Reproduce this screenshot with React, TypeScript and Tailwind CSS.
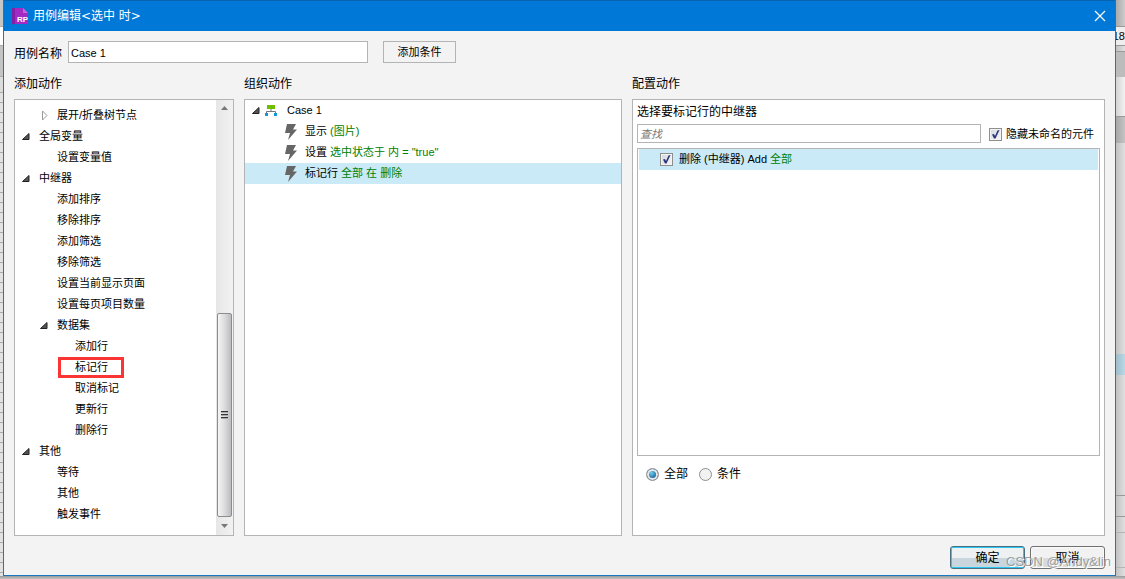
import React from "react";

type TreeItem = {
  label: string;
  level: 0 | 1 | 2;
  state?: "open" | "closed";
  marked?: boolean;
};

const treeItems: TreeItem[] = [
  { label: "展开/折叠树节点", level: 1, state: "closed" },
  { label: "全局变量", level: 0, state: "open" },
  { label: "设置变量值", level: 1 },
  { label: "中继器", level: 0, state: "open" },
  { label: "添加排序", level: 1 },
  { label: "移除排序", level: 1 },
  { label: "添加筛选", level: 1 },
  { label: "移除筛选", level: 1 },
  { label: "设置当前显示页面", level: 1 },
  { label: "设置每页项目数量", level: 1 },
  { label: "数据集", level: 1, state: "open" },
  { label: "添加行", level: 2 },
  { label: "标记行", level: 2, marked: true },
  { label: "取消标记", level: 2 },
  { label: "更新行", level: 2 },
  { label: "删除行", level: 2 },
  { label: "其他", level: 0, state: "open" },
  { label: "等待", level: 1 },
  { label: "其他", level: 1 },
  { label: "触发事件", level: 1 },
];

const indents = ["pl-[6px]", "pl-[24px]", "pl-[42px]"];

function OpenArrow() {
  return (
    <svg width="9" height="9" viewBox="0 0 9 9" className="shrink-0" aria-hidden="true">
      <path d="M8 1.5V7.5H1.5Z" fill="#555" stroke="#222" strokeWidth="1" />
    </svg>
  );
}

function ClosedArrow() {
  return (
    <svg width="9" height="11" viewBox="0 0 9 11" className="shrink-0" aria-hidden="true">
      <path d="M3.5 1V10L8 5.5Z" fill="#fff" stroke="#999" strokeWidth="1" />
    </svg>
  );
}

function Bolt() {
  return (
    <svg width="12" height="16" viewBox="0 0 12 16" className="shrink-0" aria-hidden="true">
      <path d="M2 0H11L8 5.5H12L3 16L5 9H0Z" fill="#666" />
    </svg>
  );
}

function CaseIcon() {
  return (
    <svg width="12" height="11" viewBox="0 0 12 11" className="block shrink-0" aria-hidden="true">
      <path d="M6 4V6M1.5 9V6.5H10.5V9" fill="none" stroke="#777" />
      <rect x="2" width="8" height="4" fill="#6fbe00" />
      <rect y="8" width="3" height="3" fill="#1296db" />
      <rect x="9" y="8" width="3" height="3" fill="#1296db" />
    </svg>
  );
}

function Tick({ id }: { id: string }) {
  return (
    <span className="grid size-[13px] shrink-0">
      <input
        id={id}
        type="checkbox"
        defaultChecked
        className="peer col-start-1 row-start-1 size-[13px] appearance-none border border-[#8e8f8f] bg-linear-to-br from-[#d3d6db] to-[#f8f8f8] shadow-[inset_0_0_0_1px_#f4f4f4]"
      />
      <svg
        viewBox="0 0 13 13"
        className="pointer-events-none invisible col-start-1 row-start-1 size-[13px] peer-checked:visible"
        aria-hidden="true"
      >
        <path d="M3 6.5L5 6L6 8L8.5 2.5L10.5 2L6.5 10.5H5Z" fill="#2b347c" />
      </svg>
    </span>
  );
}

function Choice({ id, label, checked }: { id: string; label: string; checked?: boolean }) {
  return (
    <div className="flex items-center gap-[5px]">
      <input
        id={id}
        type="radio"
        name="scope"
        defaultChecked={checked}
        className="size-[13px] appearance-none rounded-full border border-[#8e8f8f] bg-[#f2f2f2] checked:bg-radial-[at_40%_35%] checked:from-[#6fd0f5] checked:from-0% checked:to-[#0b4f80] checked:to-70% checked:shadow-[inset_0_0_0_2px_#e8e8e8]"
      />
      <label htmlFor={id}>{label}</label>
    </div>
  );
}

function ActionTree() {
  return (
    <div className="flex h-full border border-[#b4b4b4] bg-white text-[11px]">
      <ul className="min-w-0 flex-1 pt-[5px]">
        {treeItems.map((item, i) => (
          <li key={i} className={`flex h-[21px] items-center ${indents[item.level]}`}>
            <span className="flex w-[9px] shrink-0 justify-center">
              {item.state === "open" && <OpenArrow />}
              {item.state === "closed" && <ClosedArrow />}
            </span>
            {item.marked ? (
              <span className="-ml-[8px] flex h-[21px] w-[66px] items-center border-3 border-[#fb3434] pl-[14px]">
                {item.label}
              </span>
            ) : (
              <span className="pl-[9px]">{item.label}</span>
            )}
          </li>
        ))}
      </ul>
      <div className="flex w-[17px] flex-col items-center bg-linear-to-r from-[#e6e6e6] to-[#f2f2f2]">
        <svg width="7" height="17" viewBox="0 0 7 17" aria-hidden="true">
          <path d="M3.5 6L7 10H0Z" fill="#777" />
        </svg>
        <div className="flex-1" />
        <div className="flex h-[204px] w-[15px] items-center justify-center rounded-[2px] border border-[#8c8c8c] bg-linear-to-r from-[#f5f5f5] via-[#dcdcdf] to-[#bcbcc0]">
          <svg width="7" height="9" viewBox="0 0 7 9" aria-hidden="true">
            <path d="M0 .5H7M0 3.5H7M0 6.5H7" stroke="#333" />
            <path d="M0 1.5H7M0 4.5H7M0 7.5H7" stroke="#aaa" />
          </svg>
        </div>
        <svg width="7" height="18" viewBox="0 0 7 18" aria-hidden="true">
          <path d="M3.5 11L7 7H0Z" fill="#777" />
        </svg>
      </div>
    </div>
  );
}

function CaseRow({ name, detail, selected }: { name: string; detail: string; selected?: boolean }) {
  return (
    <li className={`flex h-[21px] items-center pl-[40px] ${selected ? "bg-[#cbeaf7]" : ""}`}>
      <Bolt />
      <span className="pl-[8px] whitespace-nowrap">
        {name} <span className="text-[#008000]">{detail}</span>
      </span>
    </li>
  );
}

function CasePanel() {
  return (
    <ul className="h-full border border-[#b4b4b4] bg-white text-[11px]">
      <li className="flex h-[21px] items-center pl-[6px]">
        <OpenArrow />
        <span className="pl-[5px]">
          <CaseIcon />
        </span>
        <span className="pl-[10px]">Case 1</span>
      </li>
      <CaseRow name="显示" detail="(图片)" />
      <CaseRow name="设置" detail={'选中状态于 内 = "true"'} />
      <CaseRow name="标记行" detail="全部 在 删除" selected />
    </ul>
  );
}

function ConfigPanel() {
  return (
    <div className="flex h-full flex-col border border-[#b4b4b4] bg-white px-[4px]">
      <h3 className="pt-[2px] leading-[20px]">选择要标记行的中继器</h3>
      <div className="flex items-center pt-[2px] text-[11px]">
        <input
          type="text"
          aria-label="查找"
          placeholder="查找"
          className="h-[19px] min-w-0 flex-1 border border-[#b4b4b4] px-[2px] italic placeholder:text-[#777]"
        />
        <div className="flex items-center gap-[4px] pt-[2px] pr-[6px] pl-[8px]">
          <Tick id="hide-unnamed" />
          <label htmlFor="hide-unnamed" className="whitespace-nowrap">
            隐藏未命名的元件
          </label>
        </div>
      </div>
      <div className="mt-[5px] flex-1 border border-[#b4b4b4] px-px">
        <div className="flex h-[21px] items-center gap-[6px] bg-[#cbeaf7] pl-[21px] text-[11px]">
          <Tick id="repeater" />
          <label htmlFor="repeater">
            删除 (中继器) Add <span className="text-[#008000]">全部</span>
          </label>
        </div>
      </div>
      <div className="flex h-[79px] items-start gap-[11px] pt-[9px] pl-[9px] leading-[18px]">
        <Choice id="scope-all" label="全部" checked />
        <Choice id="scope-condition" label="条件" />
      </div>
    </div>
  );
}

function TitleBar() {
  return (
    <header className="flex h-[31px] shrink-0 items-center border-t border-[#0a63ad] bg-[#0078d7] pr-[9px] pl-[8px] text-white">
      <svg width="16" height="16" viewBox="0 0 16 16" aria-hidden="true">
        <path d="M0 0H11L16 5V16H0Z" fill="#a32bc4" />
        <path d="M0 0H3V16H0Z" fill="#8420a5" />
        <path d="M11 0V5H16Z" fill="#c568dc" />
        <text x="5" y="14" fontSize="8" fontWeight="bold" fontFamily="Liberation Sans" fill="#fff">
          RP
        </text>
      </svg>
      <h1 className="flex-1 pl-[5px] font-['DejaVu_Sans','Noto_Sans_CJK_SC',sans-serif] text-[12px]">
        用例编辑&lt;选中 时&gt;
      </h1>
      <button type="button" aria-label="关闭" className="flex">
        <svg width="12" height="12" viewBox="0 0 12 12" aria-hidden="true">
          <path d="M1 1L11 11M11 1L1 11" stroke="#fff" strokeWidth="1.2" />
        </svg>
      </button>
    </header>
  );
}

function LeftEdge() {
  return (
    <div className="flex w-[3px] shrink-0 flex-col overflow-hidden bg-[#d9d9d9]" aria-hidden="true">
      <div className="h-[26px] bg-[#c6c6c6]" />
      <div className="h-[19px] border-t border-[#aaa] bg-white" />
      <div className="h-[32px] border-y border-[#aaa] bg-[#c4c4c4]" />
      <div className="h-[15px] bg-[#dcdcdc]" />
      <div className="flex-1 bg-[repeating-linear-gradient(to_bottom,#aaa_0px,#aaa_1px,#e2e2e2_1px,#e2e2e2_10px)]" />
    </div>
  );
}

function RightEdge() {
  return (
    <div className="flex w-[9px] shrink-0 flex-col overflow-hidden bg-linear-to-r from-[#c2c2c2] to-[#e0e0e0]" aria-hidden="true">
      <div className="h-[26px] bg-linear-to-r from-[#aaa] to-[#ccc]" />
      <div className="flex h-[20px] items-center justify-end border-y border-[#999] bg-[#eee] text-[11px]">18</div>
      <div className="h-[5px]" />
      <div className="h-[26px] border-t border-[#999] bg-[#bcbcbc]" />
      <div className="h-[39px] bg-linear-to-r from-[#d4d4d4] to-[#f2f2f2]" />
      <div className="h-[27px] border-t border-[#999] bg-linear-to-r from-[#a8a8a8] to-[#c4c4c4]" />
      <div className="h-[211px]" />
      <div className="h-[21px] bg-linear-to-r from-[#9fbdc9] to-[#b9d9e6]" />
      <div className="h-[120px]" />
      <div className="h-[21px] border-t border-[#999]" />
      <div className="h-[16px] border-t border-[#999]" />
      <div className="h-[36px] border-y border-[#b4b4b4]" />
    </div>
  );
}

export default function App() {
  return (
    <div className="relative flex min-h-screen flex-col bg-[#b0b0b0] font-['Liberation_Sans','Noto_Sans_CJK_SC',sans-serif] text-[12px] text-black">
      <div className="flex flex-1">
        <LeftEdge />
        <main className="flex min-w-0 flex-1 flex-col border-x border-b border-[#1a78c2] bg-[#f3f3f3]">
          <TitleBar />
          <form className="flex flex-1 flex-col px-[10px] pt-[10px] pb-[6px]" onSubmit={(e) => e.preventDefault()}>
            <div className="flex h-[22px] items-center">
              <label htmlFor="case-name" className="pt-[3px] pr-[6px]">
                用例名称
              </label>
              <input
                id="case-name"
                type="text"
                defaultValue="Case 1"
                className="h-[22px] w-[300px] border border-[#b4b4b4] bg-white px-[2px] pt-[2px] text-[11px]"
              />
              <button type="button" className="ml-[15px] h-[22px] w-[73px] border border-[#b4b4b4] text-[11px]">
                添加条件
              </button>
            </div>
            <div className="grid flex-1 grid-cols-[220px_378fr_473fr] gap-x-[10px] pt-[11px]">
              <section className="flex flex-col">
                <h2 className="h-[25px] leading-[21px]">添加动作</h2>
                <div className="flex-1">
                  <ActionTree />
                </div>
              </section>
              <section className="flex flex-col">
                <h2 className="h-[25px] leading-[21px]">组织动作</h2>
                <div className="flex-1">
                  <CasePanel />
                </div>
              </section>
              <section className="flex flex-col">
                <h2 className="h-[25px] leading-[21px]">配置动作</h2>
                <div className="flex-1">
                  <ConfigPanel />
                </div>
              </section>
            </div>
            <div className="flex justify-end gap-[5px] pt-[10px]">
              <button
                type="submit"
                className="h-[23px] w-[75px] rounded-[3px] border border-[#4c6f80] bg-linear-to-b from-[#eef1f2] from-50% to-[#c9d6dd] to-50% shadow-[inset_0_0_0_1px_#2cc8f4]"
              >
                确定
              </button>
              <button
                type="button"
                className="h-[23px] w-[75px] rounded-[3px] border border-[#707070] bg-linear-to-b from-[#f2f2f2] from-50% to-[#dadada] to-50% shadow-[inset_0_0_0_1px_#fafafa]"
              >
                取消
              </button>
            </div>
          </form>
        </main>
        <RightEdge />
      </div>
      <div className="h-[3px] bg-linear-to-b from-[#999] to-[#c4c4c4]" />
      <span className="pointer-events-none absolute right-[14px] bottom-[7px] text-[13px] leading-[20px] text-[#888]/80 [text-shadow:1px_1px_0_#fff]">
        CSDN @Andy&amp;lin
      </span>
    </div>
  );
}
